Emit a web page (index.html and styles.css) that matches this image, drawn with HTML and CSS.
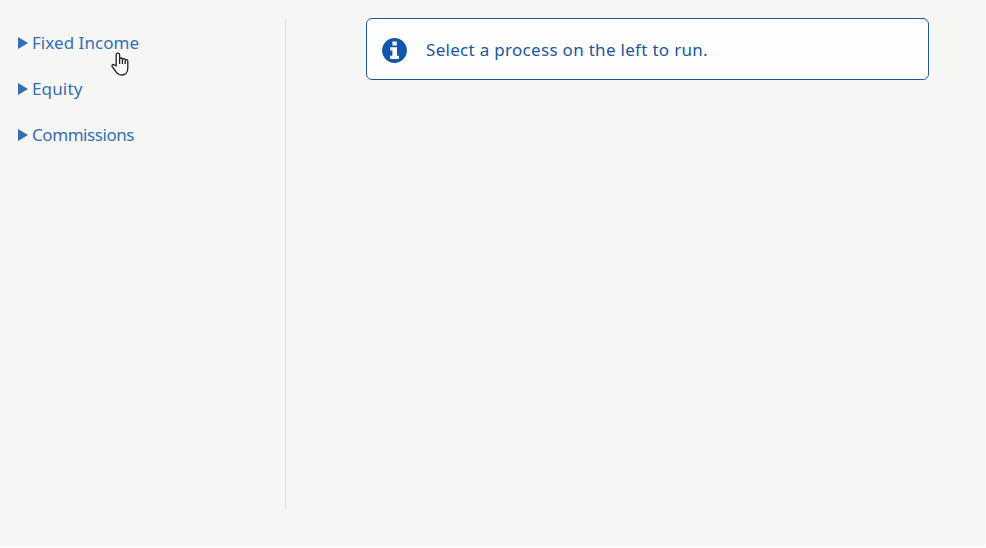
FILE: index.html
```html
<!DOCTYPE html>
<html lang="en">
<head>
<meta charset="utf-8">
<title>Processes</title>
<link rel="stylesheet" href="styles.css">
</head>
<body>
<div class="page">
  <nav class="sidebar">
    <a class="item"><svg class="caret" viewBox="0 0 10 12"><path d="M0 0 10 6 0 12z"/></svg><span class="label fixed">Fixed Income</span></a>
    <a class="item"><svg class="caret" viewBox="0 0 10 12"><path d="M0 0 10 6 0 12z"/></svg><span class="label equity">Equity</span></a>
    <a class="item"><svg class="caret" viewBox="0 0 10 12"><path d="M0 0 10 6 0 12z"/></svg><span class="label commissions">Commissions</span></a>
  </nav>
  <main class="content">
    <div class="notice">
      <svg class="info" viewBox="0 0 25 25"><circle cx="12.500" cy="12.500" r="12.400"/><path class="mark" d="M10.400 3.600h4.400v3.800h-4.400zM8.300 9.200h6.700v8.600h1.900v3.200H8.200v-3.200h2.200v-5.400H8.300z"/></svg>
      <span class="message">Select a process on the left to run.</span>
    </div>
  </main>
  <svg class="pointer" viewBox="0 0 18 24"><path d="M5.2 14V2.8a1.7 1.7 0 0 1 3.4 0V9 7.4a1.4 1.4 0 0 1 2.8 0V9.500 8a1.4 1.4 0 0 1 2.8 0v2-1a1.3 1.3 0 0 1 2.6 0v7c0 4-2.3 7-6 7-3.2 0-4.8-1.500-6.300-4L1.300 14.800c-1-1.900.9-2.900 2.100-1.800zM8.600 9v3M11.400 9.500V12M14.200 10v2"/></svg>
</div>
</body>
</html>
```
FILE: styles.css
```css
* { box-sizing: border-box; }
body {
  margin: 0;
  background: #fdfdfd;
  font-family: "Trebuchet MS", "Noto Sans", sans-serif;
  font-size: 17px;
  line-height: 24px;
}
.page {
  position: relative;
  display: flex;
  width: 985px;
  height: 546px;
  padding: 18px 56px 36px 18px;
  background: #f6f6f5;
}
.sidebar {
  display: flex;
  flex-direction: column;
  gap: 22px;
  width: 268px;
  padding-top: 13px;
  border-right: 1px solid #dfe1e5;
  color: #356fb3;
}
.item {
  display: flex;
  align-items: center;
  gap: 4px;
}
.caret {
  width: 10px;
  height: 12px;
  fill: #2e70b5;
}
.label, .message { white-space: nowrap; }
.fixed { letter-spacing: 0.05px; }
.equity { letter-spacing: 0.15px; }
.commissions { letter-spacing: -0.43px; }
.content {
  flex: 1;
  padding-left: 80px;
}
.notice {
  display: flex;
  align-items: center;
  gap: 19px;
  height: 62px;
  padding-left: 15px;
  border: 1px solid #235698;
  border-radius: 6px;
  background: #fefefe;
  color: #21569c;
}
.info {
  width: 25px;
  height: 25px;
  margin-top: 2px;
  fill: #1457aa;
}
.mark { fill: #fefefe; }
.message {
  padding-top: 1px;
  letter-spacing: 0.3px;
}
.pointer {
  position: absolute;
  left: 111px;
  top: 52px;
  width: 18px;
  height: 24px;
  fill: #fff;
  stroke: #1c1c2b;
  stroke-width: 1.3;
  stroke-linejoin: round;
}
```
